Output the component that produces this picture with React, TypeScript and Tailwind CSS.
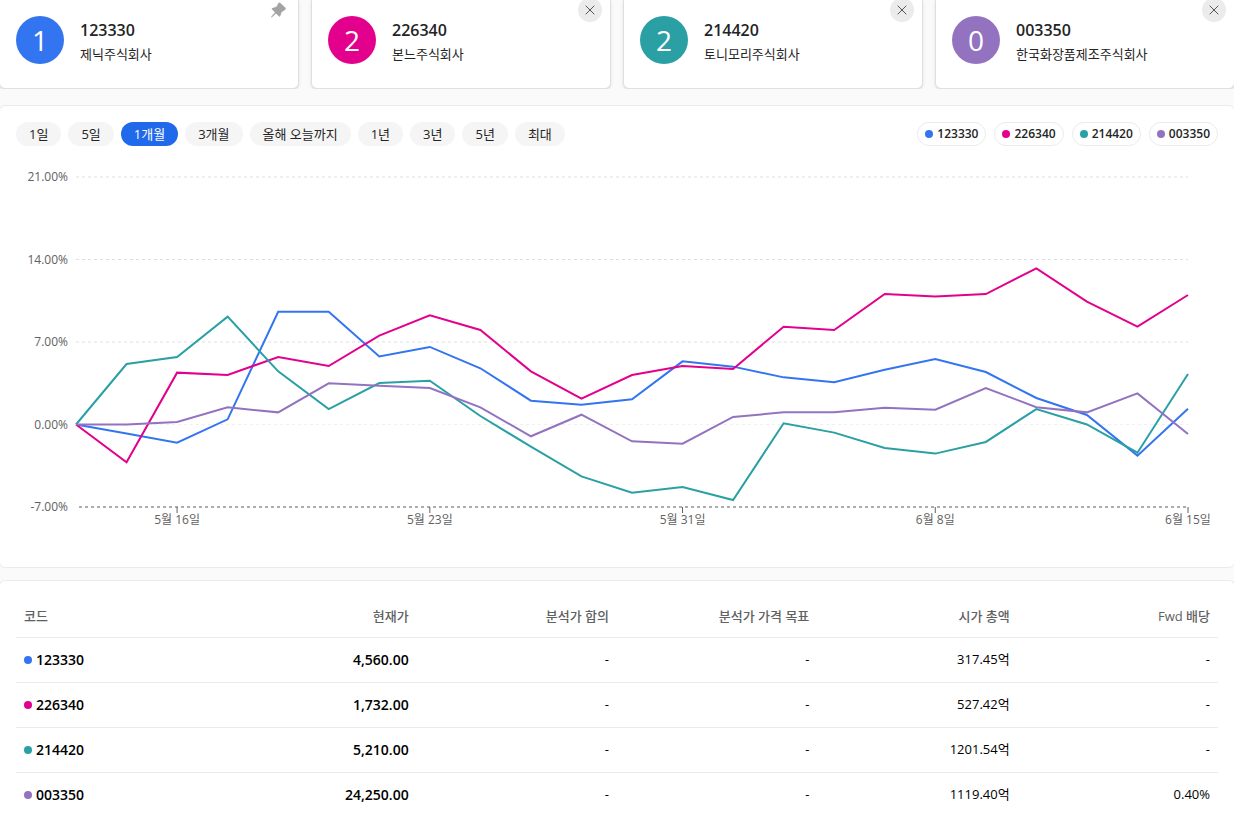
import type { FC } from 'react';
import React, { useState } from 'react';

interface Stock {
  code: string;
  name: string;
  bg: string;
  color: string;
  price: string;
  marketCap: string;
  dividend: string;
  changes: number[];
}

const stocks: Stock[] = [
  {
    code: '123330',
    name: '제닉주식회사',
    bg: 'bg-[#3375f0]',
    color: '#3375f0',
    price: '4,560.00',
    marketCap: '317.45억',
    dividend: '-',
    changes: [0, -0.76, -1.54, 0.44, 9.57, 9.57, 5.78, 6.58, 4.77, 2.02, 1.68, 2.14, 5.36, 4.91, 4, 3.58, 4.65, 5.56, 4.45, 2.25, 0.81, -2.64, 1.34],
  },
  {
    code: '226340',
    name: '본느주식회사',
    bg: 'bg-[#e3008c]',
    color: '#e3008c',
    price: '1,732.00',
    marketCap: '527.42억',
    dividend: '-',
    changes: [0, -3.21, 4.4, 4.2, 5.73, 4.96, 7.54, 9.26, 8.02, 4.51, 2.19, 4.2, 4.96, 4.71, 8.3, 8.02, 11.07, 10.87, 11.07, 13.25, 10.42, 8.3, 10.99],
  },
  {
    code: '214420',
    name: '토니모리주식회사',
    bg: 'bg-[#2aa0a4]',
    color: '#2aa0a4',
    price: '5,210.00',
    marketCap: '1201.54억',
    dividend: '-',
    changes: [0, 5.13, 5.73, 9.15, 4.51, 1.31, 3.52, 3.72, 0.72, -1.88, -4.4, -5.78, -5.3, -6.41, 0.1, -0.69, -1.99, -2.47, -1.48, 1.31, 0, -2.39, 4.28],
  },
  {
    code: '003350',
    name: '한국화장품제조주식회사',
    bg: 'bg-[#9373c0]',
    color: '#9373c0',
    price: '24,250.00',
    marketCap: '1119.40억',
    dividend: '0.40%',
    changes: [0, 0, 0.21, 1.46, 1.03, 3.49, 3.29, 3.1, 1.46, -1, 0.83, -1.43, -1.63, 0.64, 1.03, 1.03, 1.43, 1.26, 3.1, 1.46, 1.03, 2.64, -0.81],
  },
];

const ranges = ['1일', '5일', '1개월', '3개월', '올해 오늘까지', '1년', '3년', '5년', '최대'];
const columns = ['코드', '현재가', '분석가 합의', '분석가 가격 목표', '시가 총액', 'Fwd 배당'];

// Chart geometry, in viewBox units
const LEFT = 60;
const RIGHT = 1172;
const ZERO = 264.5;
const PER_PERCENT = 82.5 / 7;
const AXIS = 347;

const xAt = (index: number) => LEFT + (index * (RIGHT - LEFT)) / 22;
const yAt = (value: number) => ZERO - value * PER_PERCENT;

const gridLines = [21, 14, 7, 0];
const dateTicks = [
  { index: 2, label: '5월 16일' },
  { index: 7, label: '5월 23일' },
  { index: 12, label: '5월 31일' },
  { index: 17, label: '6월 8일' },
  { index: 22, label: '6월 15일' },
];

const PinIcon: FC = () => (
  <svg viewBox="0 0 16 16" className="size-4" fill="#a3a3a3" aria-hidden="true">
    <path d="M8.3 1.2a1.6 1.6 0 0 1 2.3 0l4.6 4.4a1.5 1.5 0 0 1-.3 2.3l-3.2 2-1.4 4a.9.9 0 0 1-1.5.3L6 11.4 2 15.2l-.9.2.2-1L5 10.4 2.2 7.6a.9.9 0 0 1 .3-1.5l3.9-1.4z" />
  </svg>
);

const CloseIcon: FC = () => (
  <svg viewBox="0 0 10 10" className="size-2.5" fill="none" stroke="#555" strokeLinecap="round" aria-hidden="true">
    <path d="M1 1l8 8M9 1l-8 8" />
  </svg>
);

const StockCard: FC<{ stock: Stock; pinned: boolean }> = ({ stock, pinned }) => (
  <article className="relative flex gap-4 rounded-b-md border border-t-0 border-[#e0e0e0] bg-white px-4 pt-4 pb-5.5 shadow-sm">
    <div className={`flex size-12 shrink-0 items-center justify-center rounded-full text-[28px] text-white ${stock.bg}`}>
      {stock.code.charAt(0)}
    </div>
    <div className="min-w-0 pt-0.5">
      <h2 className="text-base leading-6 font-semibold">{stock.code}</h2>
      <p className="truncate text-[13px] leading-6">{stock.name}</p>
    </div>
    {pinned ? (
      <button type="button" aria-label="고정됨" className="absolute -top-0.5 right-2 flex size-6 items-center justify-center">
        <PinIcon />
      </button>
    ) : (
      <button
        type="button"
        aria-label={`${stock.code} 제거`}
        className="absolute -top-0.5 right-2 flex size-6 items-center justify-center rounded-full bg-[#ebebeb]"
      >
        <CloseIcon />
      </button>
    )}
  </article>
);

const Chart: FC = () => (
  <svg viewBox="0 0 1202 407" className="block w-full text-xs" role="img" aria-label="수익률 비교">
    {gridLines.map((value) => (
      <g key={value}>
        <line
          x1={LEFT}
          x2={RIGHT}
          y1={yAt(value)}
          y2={yAt(value)}
          stroke={value === 0 ? '#f0f0f0' : '#dedede'}
          strokeDasharray="3 3"
        />
        <text x={52} y={yAt(value) + 4} textAnchor="end" fill="#616161">
          {value.toFixed(2)}%
        </text>
      </g>
    ))}
    <text x={52} y={AXIS + 4} textAnchor="end" fill="#616161">
      -7.00%
    </text>
    <line x1={LEFT + 3} x2={RIGHT} y1={AXIS} y2={AXIS} stroke="#adadad" strokeWidth={2} strokeDasharray="3 3" />

    {/* Date axis */}
    {dateTicks.map(({ index, label }) => (
      <g key={index}>
        <line x1={xAt(index)} x2={xAt(index)} y1={AXIS} y2={AXIS + 6} stroke="#616161" />
        <text x={xAt(index)} y={AXIS + 17} textAnchor="middle" fill="#616161">
          {label}
        </text>
      </g>
    ))}

    {stocks.map((stock) => (
      <polyline
        key={stock.code}
        points={stock.changes.map((value, i) => `${xAt(i)},${yAt(value)}`).join(' ')}
        fill="none"
        stroke={stock.color}
        strokeWidth={2}
      />
    ))}
  </svg>
);

const StockTable: FC = () => (
  <table className="w-full table-fixed text-right text-[13px] text-black">
    <thead>
      <tr className="h-10 border-b border-[#ebebeb] text-[#616161]">
        {columns.map((column) => (
          <th key={column} scope="col" className="px-2 font-medium first:text-left">
            {column}
          </th>
        ))}
      </tr>
    </thead>
    <tbody>
      {stocks.map((stock) => (
        <tr key={stock.code} className="h-[45px] border-b border-[#ebebeb] last:border-b-0">
          <th scope="row" className="px-2 text-left text-sm font-semibold">
            <span className="flex items-center gap-1">
              <span className={`size-2 rounded-full ${stock.bg}`} />
              {stock.code}
            </span>
          </th>
          <td className="px-2 text-sm font-semibold">{stock.price}</td>
          <td className="px-2">-</td>
          <td className="px-2">-</td>
          <td className="px-2">{stock.marketCap}</td>
          <td className="px-2">{stock.dividend}</td>
        </tr>
      ))}
    </tbody>
  </table>
);

const App: FC = () => {
  const [range, setRange] = useState('1개월');

  return (
    <main className="min-h-screen overflow-hidden bg-[#fafafa] font-['Open_Sans','Noto_Sans_CJK_KR',sans-serif] text-[#242424]">
      {/* Side borders run just past the window edge */}
      <div className="-mx-px">
        <section className="grid grid-cols-4 gap-3 overflow-hidden">
          {stocks.map((stock, i) => (
            <StockCard key={stock.code} stock={stock} pinned={i === 0} />
          ))}
        </section>

        <section className="mt-4 rounded-md border border-[#ebebeb] bg-white px-4 pt-4">
          <div className="flex items-center justify-between">
            <div className="flex gap-[7px]">
              {ranges.map((label) => (
                <button
                  key={label}
                  type="button"
                  aria-pressed={label === range}
                  onClick={() => setRange(label)}
                  className={`h-6 rounded-full px-[13px] text-[13px] leading-6 ${label === range ? 'bg-[#2169eb] text-white' : 'bg-[#f5f5f5]'}`}
                >
                  {label}
                </button>
              ))}
            </div>
            <ul className="flex gap-2">
              {stocks.map((stock) => (
                <li key={stock.code} className="flex h-6 items-center gap-1 rounded-full border border-[#ebebeb] px-[7px] text-xs font-semibold">
                  <span className={`size-2 rounded-full ${stock.bg}`} />
                  {stock.code}
                </li>
              ))}
            </ul>
          </div>
          <div className="mt-3.5">
            <Chart />
          </div>
        </section>

        <section className="mt-3 rounded-t-md border border-b-0 border-[#ebebeb] bg-white px-4 pt-4">
          <StockTable />
        </section>
      </div>
    </main>
  );
};

export default App;
